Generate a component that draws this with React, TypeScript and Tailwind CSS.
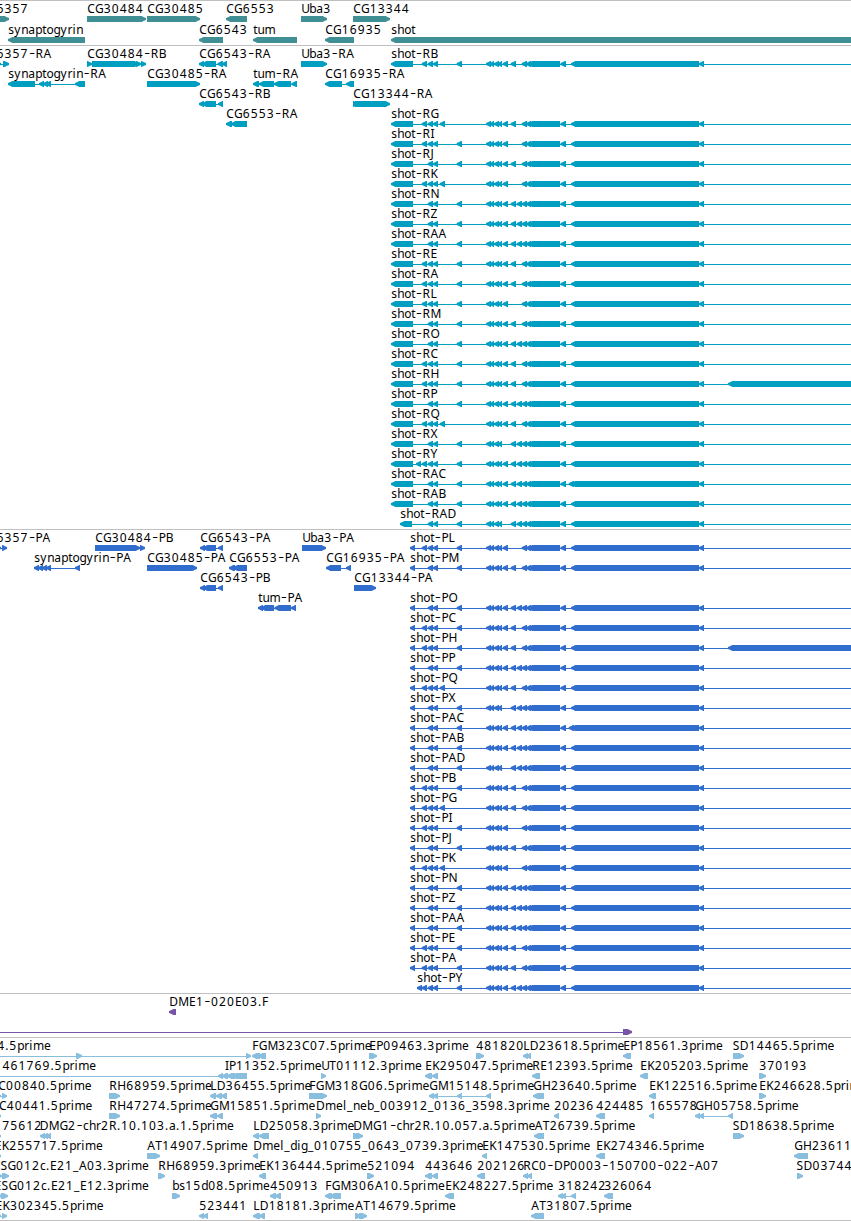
type Exon = [number, number];
type Strand = "<" | ">";

interface Feature {
  row: number;
  x: number; // label position
  name: string;
  strand: Strand;
  exons: Exon[];
}

const WIDTH = 851;

// advance widths of the label font, everything else is 7
const ADVANCE: Record<string, number> = {
  "0": 8, "1": 8, "2": 8, "3": 8, "4": 8, "5": 8, "6": 8, "7": 8, "8": 8, "9": 8,
  A: 8, C: 7.8, D: 9, F: 6.5, G: 8.7, H: 9, I: 4, J: 4, K: 7.5, L: 6.5, M: 10.7, N: 9,
  O: 9, Q: 9, R: 8, U: 8, X: 8,
  s: 6, c: 6, t: 4.2, r: 5, i: 3.8, l: 4, m: 11, ".": 4, _: 6,
};

const f = (row: number, x: number, name: string, strand: Strand, ...exons: Exon[]): Feature => ({
  row, x, name, strand, exons,
});

// optional small exons of shot
const SMALL: Record<string, Exon> = {
  Y: [416, 421],
  A: [421.7, 427],
  B: [427.7, 433],
  C: [433, 438],
  D: [439.7, 445],
  E: [456.7, 462],
  J: [502.7, 508],
  K: [510.7, 516],
  L: [516.7, 522],
  Z: [568.7, 574],
  H: [728, 860],
};

const SHARED: Exon[] = [
  [486, 491], [490, 494], [494, 499], [498, 502],
  [521.7, 527], [526, 531], [528, 560], [560.5, 566], [571, 699], [699, 704],
];

const shot = (row: number, name: string, codes: string, first: Exon = [391, 413]): Feature =>
  f(row, first[0], `shot-${name}`, "<", first, ...codes.split("").map((c) => SMALL[c]), ...SHARED, [870, 876]);

const P: Exon = [410, 415];

const genes: Feature[] = [
  f(0, -3.6, "6357", ">", [-8, 9]),
  f(0, 87, "CG30484", ">", [87, 146]),
  f(0, 147, "CG30485", ">", [147, 200]),
  f(0, 226, "CG6553", "<", [226, 247]),
  f(0, 301, "Uba3", ">", [301, 327]),
  f(0, 353, "CG13344", ">", [353, 390]),
  f(1, 8, "synaptogyrin", "<", [8, 85]),
  f(1, 199, "CG6543", "<", [199, 223]),
  f(1, 253, "tum", "<", [253, 297]),
  f(1, 325, "CG16935", "<", [325, 354]),
  f(1, 391, "shot", "<", [391, 870]),
];

const transcripts: Feature[] = [
  f(0, -3.6, "6357-RA", ">", [-6, 1], [3, 9]),
  f(0, 87, "CG30484-RB", ">", [87, 92], [92, 139], [136, 141], [141, 146]),
  f(0, 199, "CG6543-RA", "<", [199, 204], [202, 216], [217.5, 223], [222, 227]),
  f(0, 301, "Uba3-RA", ">", [301, 327]),
  f(1, 8, "synaptogyrin-RA", "<", [8, 35], [39, 44], [43, 48], [46, 51], [75, 85]),
  f(1, 147, "CG30485-RA", ">", [147, 200]),
  f(1, 253, "tum-RA", "<", [253, 259], [259, 274], [274, 291], [291.5, 297]),
  f(1, 325, "CG16935-RA", "<", [325, 342], [346, 354]),
  f(2, 199, "CG6543-RB", "<", [199, 204], [202, 216], [218, 223]),
  f(2, 353, "CG13344-RA", ">", [353, 358], [355, 390]),
  f(3, 226, "CG6553-RA", "<", [226, 232], [231, 247]),
  shot(0, "RB", "ABCEJK"),
  shot(3, "RG", "ABCDJK"),
  shot(4, "RI", "ABCEJ"),
  shot(5, "RJ", "BCEJK"),
  shot(6, "RK", "ABCDJ"),
  shot(7, "RN", "BCEJKL"),
  shot(8, "RZ", "BCEJKL"),
  shot(9, "RAA", "BCEJKL"),
  shot(10, "RE", "ABCEJK"),
  shot(11, "RA", "ABCEJK"),
  shot(12, "RL", "ABCEJ"),
  shot(13, "RM", "BCEJK"),
  shot(14, "RO", "BCEJKL"),
  shot(15, "RC", "ABCEJK"),
  shot(16, "RH", "ABCEJKH"),
  shot(17, "RP", "BCEJKL"),
  shot(18, "RQ", "ABCDJK"),
  shot(19, "RX", "BCEKL"),
  shot(20, "RY", "YABCEJKL"),
  shot(21, "RAC", "BCEJKLZ"),
  shot(22, "RAB", "BCEJKL"),
  shot(23, "RAD", "BCEKL", [400, 412]),
];

const proteins: Feature[] = [
  f(0, -3.6, "6357-PA", ">", [-6, 1], [2, 7]),
  f(0, 95, "CG30484-PB", ">", [95, 139], [135, 140], [140, 145]),
  f(0, 200, "CG6543-PA", "<", [200, 205], [203, 216], [218, 223]),
  f(0, 302, "Uba3-PA", ">", [302, 326]),
  f(1, 34, "synaptogyrin-PA", "<", [34, 39], [38, 43], [42, 47], [46, 51], [75, 80]),
  f(1, 147, "CG30485-PA", ">", [147, 197]),
  f(1, 229, "CG6553-PA", "<", [229, 235], [233, 247]),
  f(1, 326, "CG16935-PA", "<", [326, 341], [346, 351]),
  f(2, 200, "CG6543-PB", "<", [200, 205], [203, 216], [218, 223]),
  f(2, 354, "CG13344-PA", ">", [354, 359], [355, 376]),
  f(3, 258, "tum-PA", "<", [258, 263], [261, 274], [274.5, 291], [291, 296]),
  shot(0, "PL", "ABCEJ", P),
  shot(1, "PM", "BCEJK", P),
  shot(3, "PO", "BCEJKL", P),
  shot(4, "PC", "ABCEJK", P),
  shot(5, "PH", "ABCEJKH", P),
  shot(6, "PP", "BCEJKL", P),
  shot(7, "PQ", "ABCDJK", P),
  shot(8, "PX", "BCEKL", P),
  shot(9, "PAC", "BCEJKLZ", P),
  shot(10, "PAB", "BCEJKL", P),
  shot(11, "PAD", "BCEKL", P),
  shot(12, "PB", "ABCEJK", P),
  shot(13, "PG", "ABCDJK", P),
  shot(14, "PI", "ABCEJ", P),
  shot(15, "PJ", "BCEJK", P),
  shot(16, "PK", "ABCDJ", P),
  shot(17, "PN", "BCEJKL", P),
  shot(18, "PZ", "BCEJKL", P),
  shot(19, "PAA", "BCEJKL", P),
  shot(20, "PE", "ABCEJK", P),
  shot(21, "PA", "ABCEJK", P),
  shot(22, "PY", "ABCEJKL", [417, 422]),
];

const clones: Feature[] = [
  f(0, 169, "DME1-020E03.F", "<", [169, 176]),
  f(1, 0, "", ">", [-20, -10], [623, 632]),
];

const ests: Feature[] = [
  f(0, -3, "4.5prime", ">", [-20, -10], [76, 82], [246, 251]),
  f(0, 252, "FGM323C07.5prime", "<", [252, 260], [258, 266]),
  f(0, 369, "EP09463.3prime", ">", [369, 377]),
  f(0, 476, "481820", ">", [476, 484]),
  f(0, 523, "LD23618.5prime", "<", [523, 528], [526, 531]),
  f(0, 623, "EP18561.3prime", "<", [623, 631]),
  f(0, 732.5, "SD14465.5prime", ">", [733, 744]),
  f(1, 2.3, "461769.5prime", "<", [-20, -10], [218, 223], [222, 228], [227, 235], [232, 247]),
  f(1, 224.7, "IP11352.5prime", "<"),
  f(1, 321, "UT01112.3prime", ">", [321, 326]),
  f(1, 425, "EK295047.5prime", "<", [425, 432], [432, 438]),
  f(1, 532, "RE12393.5prime", "<", [532, 540]),
  f(1, 640, "EK205203.5prime", "<", [640, 648]),
  f(1, 759, "370193", ">", [759, 766]),
  f(2, -2, "C00840.5prime", ">", [-6, 1], [2, 7]),
  f(2, 109, "RH68959.5prime", ">", [109, 120]),
  f(2, 210, "LD36455.5prime", "<", [210, 216], [216, 222], [221, 227]),
  f(2, 309, "FGM318G06.5prime", ">", [309, 323], [318, 327]),
  f(2, 429, "GM15148.5prime", "<", [429, 434], [433, 438], [457, 462], [486, 491]),
  f(2, 533, "GH23640.5prime", "<", [533, 544]),
  f(2, 649, "EK122516.5prime", "<", [649, 656]),
  f(2, 759, "EK246628.5prime", ">", [759, 766]),
  f(3, -1.2, "C40441.5prime", ">", [-6, 1]),
  f(3, 109, "RH47274.5prime", ">", [109, 120]),
  f(3, 210, "GM15851.5prime", "<", [210, 217], [217, 223]),
  f(3, 315.9, "Dmel_neb_003912_0136_3598.3prime", ">", [316, 321]),
  f(3, 554, "20236", "<", [554, 559]),
  f(3, 596, "424485", "<", [596, 605]),
  f(3, 649.5, "165578", "<", [649, 654]),
  f(3, 695, "GH05758.5prime", "<", [695, 700], [699, 704], [728, 733]),
  f(4, 2, "75612", ">", [-6, 1]),
  f(4, 39.5, "DMG2-chr2R.10.103.a.1.5prime", "<", [40, 45], [43, 48], [46, 51]),
  f(4, 253, "LD25058.3prime", "<", [253, 259], [259, 269]),
  f(4, 353, "DMG1-chr2R.10.057.a.5prime", ">", [353, 359], [356, 363]),
  f(4, 534.5, "AT26739.5prime", "<", [534, 544]),
  f(4, 732.5, "SD18638.5prime", ">", [733, 744]),
  f(5, -5.5, "EK255717.5prime", ">", [-6, 1]),
  f(5, 147, "AT14907.5prime", ">", [147, 160]),
  f(5, 253, "Dmel_dig_010755_0643_0739.3prime", "<", [253, 258]),
  f(5, 482, "EK147530.5prime", "<", [482, 487]),
  f(5, 596, "EK274346.5prime", "<", [596, 605]),
  f(5, 794, "GH23611", "<", [794, 808]),
  f(6, -6.8, "ESG012c.E21_A03.3prime", ">", [-6, 2], [2, 9]),
  f(6, 158, "RH68959.3prime", ">", [158, 165]),
  f(6, 259, "EK136444.5prime", "<", [259, 266]),
  f(6, 367, "521094", ">", [367, 374]),
  f(6, 425, "443646", "<", [425, 432], [432, 438]),
  f(6, 477, "202126", "<", [477, 485]),
  f(6, 523, "RC0-DP0003-150700-022-A07", "<", [523, 528], [527, 532]),
  f(6, 796.3, "SD03744", ">", [797, 803]),
  f(7, -5.8, "ESG012c.E21_E12.3prime", ">", [-6, 2], [1, 8]),
  f(7, 172, "bs15d08.5prime", ">", [172, 180]),
  f(7, 270, "450913", "<", [270, 276], [275, 281]),
  f(7, 325, "FGM306A10.5prime", "<", [325, 332], [330, 341]),
  f(7, 445, "EK248227.5prime", "<", [445, 454]),
  f(7, 558, "318242", "<", [558, 563], [561, 566], [571, 576]),
  f(7, 604, "326064", "<", [604, 613]),
  f(8, -4.7, "EK302345.5prime", ">", [-6, 1], [2, 7]),
  f(8, 199, "523441", "<", [199, 204], [203, 208]),
  f(8, 253, "LD18181.3prime", "<", [253, 260], [259, 265]),
  f(8, 355, "AT14679.5prime", ">", [355, 361], [359, 367]),
  f(8, 531, "AT31807.5prime", "<", [531, 544]),
];

function charPositions(name: string, x: number) {
  const xs: number[] = [];
  let pos = x + 0.2;
  for (const c of name) {
    // the hyphen sits in the middle of its cell
    xs.push(Math.round((c === "-" ? pos + 0.6 : pos) * 10) / 10);
    pos += ADVANCE[c] ?? 7;
  }
  return xs.join(" ");
}

function exonPoints([a, b]: Exon, strand: Strand, y: number) {
  const head = Math.min(5, b - a);
  const dir = strand === "<" ? 1 : -1;
  const tip = strand === "<" ? a : b;
  const mid = tip + dir * head * 0.5;
  const neck = tip + dir * head * 0.85;
  const tail = strand === "<" ? b : a;
  return [
    [tip, y + 2], [mid, y + 1], [neck, y], [tail, y],
    [tail, y + 6], [neck, y + 6], [mid, y + 5], [tip, y + 4],
  ].join(" ");
}

function Glyph({ feature, pitch }: { feature: Feature; pitch: number }) {
  const { row, x, name, strand, exons } = feature;
  const top = row * pitch;
  const start = exons.length ? exons[0][0] : 0;
  const end = exons.length ? exons[exons.length - 1][1] : 0;
  return (
    <g>
      {exons.length > 1 && <rect x={start + 1} y={top + 18} width={end - start - 2} height={1} />}
      {exons.map((exon, i) => (
        <polygon key={i} points={exonPoints(exon, strand, top + 15)} />
      ))}
      {name && (
        <text x={charPositions(name, x)} y={top + 12} className="fill-black">
          {name.split(/(-)/).map((part, i) =>
            part === "-" ? (
              <tspan key={i} className="text-[18px] font-light">{part}</tspan>
            ) : (
              part
            )
          )}
        </text>
      )}
    </g>
  );
}

interface TrackProps {
  features: Feature[];
  height: number;
  color: string;
  pitch?: number;
}

function Track({ features, height, color, pitch = 20 }: TrackProps) {
  return (
    <section className="border-t border-[#c0c0c0]">
      <svg width={WIDTH} height={height} className={`block overflow-hidden text-[12px] ${color}`}>
        {features.map((feature, i) => (
          <Glyph key={i} feature={feature} pitch={pitch} />
        ))}
      </svg>
    </section>
  );
}

export default function App() {
  return (
    <main className="flex w-[851px] flex-col overflow-hidden border-b border-[#c0c0c0] bg-white font-['Noto_Sans',sans-serif]">
      <Track features={genes} height={44} pitch={21} color="fill-[#3f8f95]" />
      <Track features={transcripts} height={483} color="fill-[#009ec0]" />
      <Track features={proteins} height={463} color="fill-[#316dcd]" />
      <Track features={clones} height={43} color="fill-[#7654a8]" />
      <Track features={ests} height={182} color="fill-[#8abede]" />
    </main>
  );
}
